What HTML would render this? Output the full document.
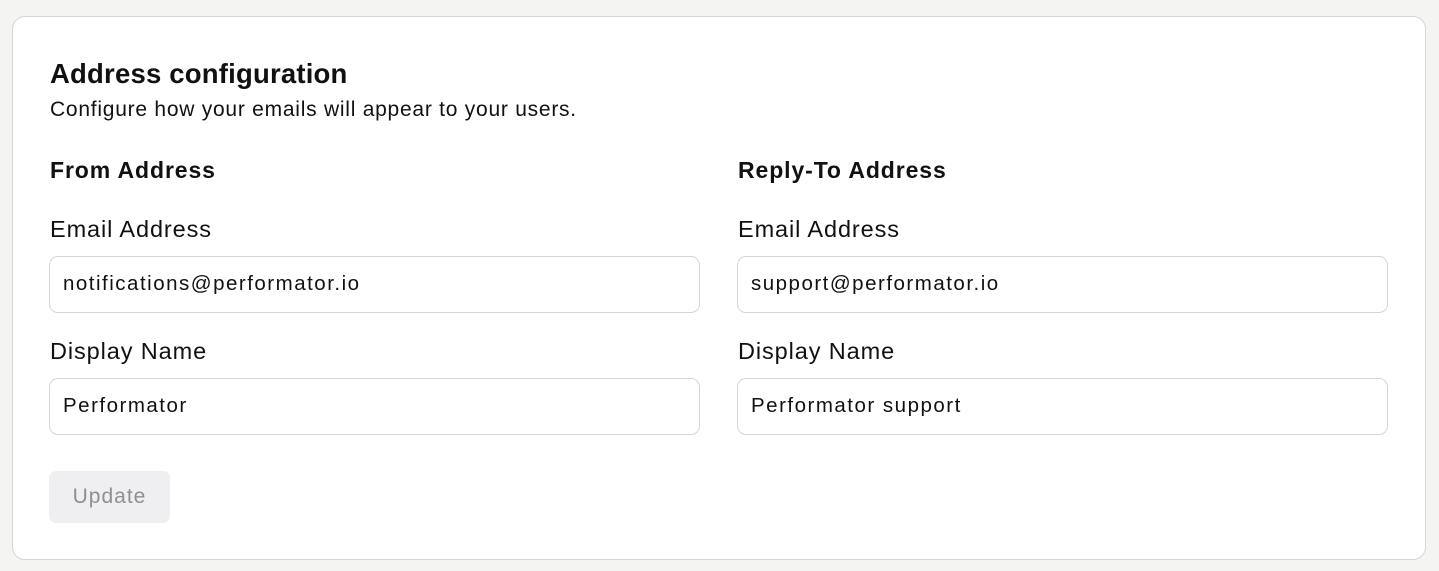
<!DOCTYPE html>
<html><head><style>
*{box-sizing:border-box;margin:0;padding:0}
body{width:1439px;height:571px;background:#f4f4f3;font-family:"Liberation Sans",sans-serif;color:#111;position:relative;overflow:hidden}
.card{position:absolute;left:12px;top:16px;width:1414px;height:544px;background:#fff;border:1.5px solid #d4d6da;border-radius:13px}
.t{position:absolute;white-space:nowrap}
.h1{left:50px;top:58px;font-size:27.5px;font-weight:bold;letter-spacing:0.2px}
.sub{left:50px;top:98px;font-size:21px;letter-spacing:0.75px}
.sec{font-size:23px;font-weight:bold;top:157px;letter-spacing:0.9px}
.lab{font-size:23.5px;letter-spacing:0.9px}
.inp{position:absolute;width:651px;height:57px;border:1.5px solid #d4d6da;border-radius:9px;font-size:20.5px;padding-left:13px;line-height:54px;letter-spacing:1.5px}
.btn{position:absolute;left:49px;top:471px;width:121px;height:52px;background:#efeff1;border-radius:7px;color:#8f8f8f;font-size:21px;letter-spacing:1px;text-align:center;line-height:52px}
</style></head><body>
<div class="card"></div>
<div class="t h1">Address configuration</div>
<div class="t sub">Configure how your emails will appear to your users.</div>
<div class="t sec" style="left:50px">From Address</div>
<div class="t sec" style="left:738px">Reply-To Address</div>
<div class="t lab" style="left:50px;top:216px">Email Address</div>
<div class="t lab" style="left:738px;top:216px">Email Address</div>
<div class="inp" style="left:49px;top:256px">notifications@performator.io</div>
<div class="inp" style="left:737px;top:256px">support@performator.io</div>
<div class="t lab" style="left:50px;top:338px">Display Name</div>
<div class="t lab" style="left:738px;top:338px">Display Name</div>
<div class="inp" style="left:49px;top:378px">Performator</div>
<div class="inp" style="left:737px;top:378px">Performator support</div>
<div class="btn">Update</div>
</body></html>
